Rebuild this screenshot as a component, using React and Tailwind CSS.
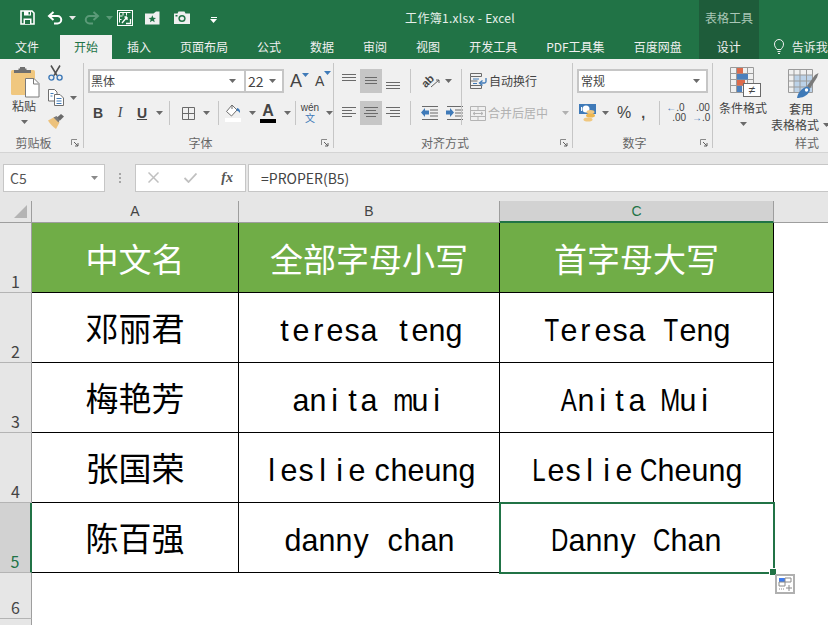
import React from 'react';

const Caret = ({ color = '#6a6a6a', className = '' }) => (
  <svg width="7" height="4" viewBox="0 0 7 4" className={'shrink-0 ' + className}>
    <path d="M0 0h7L3.5 4z" fill={color} />
  </svg>
);

const VSep = ({ className = '' }) => <div className={'w-px shrink-0 bg-[#c6c6c6] ' + className} />;

const Launcher = () => (
  <svg width="8" height="8" viewBox="0 0 8 8" className="ml-1 mr-1 shrink-0">
    <path d="M.5 6V.5H6" fill="none" stroke="#8a8a8a" />
    <path d="M3 3l4 4M7 4v3H4" fill="none" stroke="#5f5f5f" />
  </svg>
);

const GroupLabel = ({ children, className = '' }) => (
  <div className={'mt-auto flex items-center pb-px ' + className}>
    <span className="flex-1 text-center text-xs leading-4 text-[#666666]">{children}</span>
    <Launcher />
  </div>
);

// horizontal text-line icons for the alignment buttons
const Lines = ({ rows, color = '#6a6a6a', height = 24 }) => (
  <svg width="14" height={height} viewBox={'0 0 14 ' + height} className="shrink-0">
    {rows.map(([x1, x2, y], i) => (
      <path key={i} d={'M' + x1 + ' ' + y + 'H' + x2} stroke={color} strokeWidth="1" />
    ))}
  </svg>
);

const SaveIcon = () => (
  <svg width="15" height="15" viewBox="0 0 15 15">
    <path d="M1 1h11l2 2v11H1z" fill="none" stroke="#fff" strokeWidth="1.6" />
    <path d="M4 1h7v4.500H4zM3.500 8.500h8V14h-8z" fill="#fff" />
    <path d="M5 10h5v4H5z" fill="#217346" />
    <path d="M8.500 2h1.500v2.500H8.500z" fill="#217346" />
  </svg>
);

const UndoIcon = ({ color = '#fff', flip = false }) => (
  <svg width="16" height="14" viewBox="0 0 16 14" className={flip ? '-scale-x-100' : ''}>
    <path d="M3 5h7.500a3.700 3.700 0 0 1 0 7.500H7" fill="none" stroke={color} strokeWidth="2" />
    <path d="M6.500 1L2 5l4.500 4" fill="none" stroke={color} strokeWidth="2" />
  </svg>
);

const FrameIcon = () => (
  <svg width="16" height="16" viewBox="0 0 16 16">
    <rect x=".5" y=".5" width="15" height="15" fill="none" stroke="#fff" />
    <path d="M2.500 2.500h11M2.500 2.500v10M6 2.500v3M9.500 2.500v3M2.500 6h3M2.500 9.500h2" stroke="#fff" fill="none" />
    <path d="M5 13l5-6M10 7v3M10 7H7.500M9 13.500h4.500V9" stroke="#fff" strokeWidth="1.3" fill="none" />
  </svg>
);

const StarFolderIcon = () => (
  <svg width="15" height="14" viewBox="0 0 15 14">
    <path d="M0 2.500h8.500L11 .5h3.500V13.500H0z" fill="#f0f0f0" />
    <path d="M7.300 4.200l1.100 2.500 2.600.2-2 1.700.7 2.600-2.400-1.400-2.300 1.400.6-2.600-2-1.700 2.700-.2z" fill="#217346" />
  </svg>
);

const CameraIcon = () => (
  <svg width="16" height="13" viewBox="0 0 16 13">
    <path d="M0 2.500h3.500L4.500.5h6l1 2H16V13H0z" fill="#f0f0f0" />
    <circle cx="8" cy="7.500" r="3.600" fill="#217346" />
    <circle cx="8" cy="7.500" r="2.100" fill="#f0f0f0" />
    <path d="M1.500 4h2v1.500h-2z" fill="#217346" />
  </svg>
);

const PasteIcon = () => (
  <svg width="29" height="31" viewBox="0 0 29 31">
    <rect x="0" y="3" width="24" height="25" rx="1.500" fill="#f0c77f" />
    <path d="M3 3h4.500V1.500h1.500V0h5v1.500h1.500V3H20v3H3z" fill="#6f6f6f" />
    <path d="M14.500 11.500h8.500l5 5V30h-13.500z" fill="#fff" stroke="#7a7a7a" />
    <path d="M22.500 12v5h5" fill="none" stroke="#7a7a7a" />
  </svg>
);

const ScissorsIcon = () => (
  <svg width="15" height="16" viewBox="0 0 15 16">
    <path d="M3 .5l6 10M12 .5l-6 10" stroke="#4f4f4f" strokeWidth="1.5" fill="none" />
    <circle cx="3.400" cy="12.600" r="2.500" fill="none" stroke="#3f7ab8" strokeWidth="1.4" />
    <circle cx="11.600" cy="12.600" r="2.500" fill="none" stroke="#3f7ab8" strokeWidth="1.4" />
  </svg>
);

const CopyIcon = () => (
  <svg width="16" height="17" viewBox="0 0 16 17">
    <path d="M.5.5h6l2.500 2.500v9H.5z" fill="#fff" stroke="#6f6f6f" />
    <path d="M6.500 5.500h5.500l3.500 3.500v7.500h-9z" fill="#fff" stroke="#6f6f6f" />
    <path d="M2.500 4.500h3M2.500 7h2M8.500 9.500h5M8.500 12h5M8.500 14.500h5" stroke="#3f7ab8" />
  </svg>
);

const BrushIcon = () => (
  <svg width="16" height="15" viewBox="0 0 16 15">
    <path d="M0 6.500L6.500 3l5 5.500L8 15C5 13 2 10 0 6.500z" fill="#edc27c" />
    <path d="M5.500 3.500l3-1.500 3.500 3.500-1.500 3z" fill="#7a7a7a" />
    <path d="M9 3.500L13 0l3 2.500-4 4z" fill="#6a6a6a" />
  </svg>
);

const GridIcon = () => (
  <svg width="13" height="13" viewBox="0 0 13 13">
    <path d="M.5.5h12v12H.5zM6.500.5v12M.5 6.500h12" fill="none" stroke="#6a6a6a" />
  </svg>
);

const FillIcon = () => (
  <svg width="16" height="18" viewBox="0 0 16 18">
    <path d="M7 1L1.500 7.500l5 4.500L12 6z" fill="#fff" stroke="#6f6f6f" />
    <path d="M7 1v4" stroke="#6f6f6f" />
    <path d="M12 4c2 .5 3.500 2 3 5-1-1-1.500-2-3.500-2.500z" fill="#3f7ab8" />
    <path d="M0 14h16v4H0z" fill="#fff" />
  </svg>
);

const OrientIcon = () => (
  <div className="flex w-5 items-center">
    <span className="-rotate-45 font-['Liberation_Sans',sans-serif] text-[11px] leading-3 font-bold">ab</span>
    <svg width="10" height="10" viewBox="0 0 10 10" className="-ml-1 mt-1">
      <path d="M1 9l8-7M9 2H6M9 2v3" fill="none" stroke="#5f5f5f" />
    </svg>
  </div>
);

const IndentIcon = ({ flip = false }) => (
  <svg width="17" height="14" viewBox="0 0 17 14">
    {flip ? (
      <path d="M0 4.500h4V2l4 4.500-4 4.500V8.500H0z" fill="#3f7ab8" />
    ) : (
      <path d="M8 4.500H4V2L0 6.500 4 11V8.500h4z" fill="#3f7ab8" />
    )}
    <path d="M1 .5h16M9 4h8M9 7h8M9 10h8M1 13.500h16" stroke="#6a6a6a" />
  </svg>
);

const WrapIcon = () => (
  <svg width="17" height="16" viewBox="0 0 17 16">
    <path d="M.5.5h11v3H.5zM.5 3.500V15.500h11v-3H.5M.5 8h7" fill="none" stroke="#6a6a6a" />
    <path d="M3 6h6M3 10.500h4" stroke="#3f7ab8" />
    <path d="M16 5v3.500a1.500 1.500 0 0 1-1.500 1.500H10" fill="none" stroke="#3f7ab8" strokeWidth="1.3" />
    <path d="M12.500 7.500L9.500 10l3 2.500" fill="none" stroke="#3f7ab8" strokeWidth="1.3" />
  </svg>
);

const MergeIcon = () => (
  <svg width="16" height="15" viewBox="0 0 16 15">
    <path d="M.5.5h15v14H.5zM.5 4.500h15M.5 10.500h15M8 .5v4M8 10.500v4" fill="none" stroke="#b4b4b4" />
    <path d="M3 7.500h10M5 6L3 7.500 5 9M11 6l2 1.500L11 9" fill="none" stroke="#b4b4b4" />
  </svg>
);

const CurrencyIcon = () => (
  <svg width="17" height="18" viewBox="0 0 17 18">
    <path d="M0 0h17v10H0z" fill="#3f7ab8" />
    <ellipse cx="7" cy="5" rx="3.500" ry="3.500" fill="#fff" />
    <path d="M2 3h1v4H2z" fill="#fff" />
    <ellipse cx="11.500" cy="8" rx="4" ry="2" fill="#f0c77f" />
    <ellipse cx="11.500" cy="11.500" rx="4.500" ry="2" fill="#edb64f" />
    <ellipse cx="9" cy="15.500" rx="4.500" ry="2" fill="#f0c77f" />
  </svg>
);

const CondFormatIcon = () => (
  <svg width="32" height="31" viewBox="0 0 32 31">
    <path d="M.5.500h23v25H.5zM6.500.5v25M17.500.5v25M.5 6.500h23M.5 12.500h23M.5 18.500h23" fill="none" stroke="#9a9a9a" />
    <path d="M7 1h6v5.500H7z" fill="#dd6b4c" />
    <path d="M7 7h11v5.500H7z" fill="#4c80bd" />
    <path d="M7 13h8v5.500H7z" fill="#dd6b4c" />
    <path d="M7 19h5v6H7z" fill="#4c80bd" />
    <rect x="13.500" y="16.500" width="17" height="13" fill="#fff" stroke="#6a6a6a" />
    <text x="22" y="27" textAnchor="middle" fontSize="12" fill="#444444" fontFamily="Liberation Sans">≠</text>
  </svg>
);

const TableStyleIcon = () => (
  <svg width="31" height="30" viewBox="0 0 31 30">
    <path d="M6 6h19v17H6z" fill="#bcd2e8" />
    <path d="M.5.500h24v23H.5zM6 .5v23M12 .5v23M18.500.5v23M.5 6h24M.5 12h24M.5 18h24" fill="none" stroke="#9a9a9a" />
    <path d="M19 17L27 6l3.500-2-1.500 4.500-7 11z" fill="#7a7a7a" />
    <path d="M9 29c.5-5 5-10 10-11.500 3 .5 3.500 3 2.500 5C19 27 14 29 9 29z" fill="#3f7ab8" />
    <circle cx="18.500" cy="21" r="1.700" fill="#fff" />
  </svg>
);

const Select = ({ children, className = '' }) => (
  <div className={'flex h-6 items-center justify-between border-2 border-[#c6c6c6] bg-white ' + className}>
    {children}
  </div>
);

const tabs = ['插入', '页面布局', '公式', '数据', '审阅', '视图', '开发工具', 'PDF工具集', '百度网盘'];

const rows = [
  { n: 2, cn: '邓丽君', lower: 'teresa teng', proper: 'Teresa Teng' },
  { n: 3, cn: '梅艳芳', lower: 'anita mui', proper: 'Anita Mui' },
  { n: 4, cn: '张国荣', lower: 'leslie cheung', proper: 'Leslie Cheung', narrow: true },
  { n: 5, cn: '陈百强', lower: 'danny chan', proper: 'Danny Chan' },
];

// the sheet font sets latin letters in equal-width cells, wide ones get squeezed
const WIDE = 'MmDCATL';

const Latin = ({ text, narrow }) => (
  <div className="flex pt-1 font-['Liberation_Sans',sans-serif] text-[32px] leading-10 text-black">
    {text.split('').map((ch, i) => (
      ch === ' '
        ? <span key={i} className={narrow ? 'w-2 whitespace-pre' : 'w-[17px] whitespace-pre'}> </span>
        : (
          <span key={i} className="flex w-[17px] justify-center">
            <span className={WIDE.includes(ch) ? 'scale-x-75' : 'scale-x-95'}>{ch}</span>
          </span>
        )
    ))}
  </div>
);

const RowHead = ({ n, active }) => (
  <div className={'flex items-end justify-center border-b border-[#b4b4b4] pb-px text-base leading-5 ' + (active ? 'border-r-2 border-r-[#217346] bg-[#d2d2d2] text-[#217346]' : 'border-r border-r-[#9e9e9e] bg-[#e6e6e6] text-[#444444]')}>
    {n}
  </div>
);

const App = () => {
  return (
    <div className="h-[625px] w-[828px] overflow-hidden bg-white font-['Noto_Sans_CJK_SC',sans-serif]">
      {/* title bar */}
      <div className="flex h-[35px] bg-[#217346]">
        <div className="flex w-[699px] items-center pl-5">
          <SaveIcon />
          <div className="ml-3"><UndoIcon /></div>
          <Caret color="#e8e8e8" className="ml-1.5" />
          <div className="ml-2"><UndoIcon color="#5b9a78" flip /></div>
          <Caret color="#5b9a78" className="ml-1.5" />
          <div className="ml-1"><FrameIcon /></div>
          <div className="ml-3"><StarFolderIcon /></div>
          <div className="ml-3.5"><CameraIcon /></div>
          <div className="ml-5 mt-1 flex flex-col items-center gap-px">
            <div className="h-px w-1.5 bg-white" />
            <Caret color="#fff" />
          </div>
          <span className="ml-auto mr-46 text-xs tracking-wide text-[#e6efe9]">工作簿1.xlsx - Excel</span>
        </div>
        <div className="flex w-15 items-center justify-center bg-[#1e5c3a] text-xs text-[#a9c7b6]">表格工具</div>
      </div>

      {/* tabs */}
      <div className="flex h-6 gap-px bg-[#217346] pl-px text-xs leading-6 text-[#f0f0f0]">
        <div className="px-3.5">文件</div>
        <div className="ml-1.5 bg-[#f0f0f0] px-3.5 text-[#217346]">开始</div>
        {tabs.map(t => <div key={t} className="px-3.5 whitespace-nowrap">{t}</div>)}
        <div className="ml-0.5 w-15 bg-[#1e5c3a] text-center">设计</div>
        <div className="ml-3.5 flex items-center gap-2 whitespace-nowrap">
          <svg width="10" height="16" viewBox="0 0 10 16">
            <path d="M3 10.500C2 8.500.5 8 .5 5a4.500 4.500 0 0 1 9 0c0 3-1.500 3.500-2.500 5.500zM3.500 12.500h3M4 14.500h2" fill="none" stroke="#f0f0f0" />
          </svg>
          告诉我
        </div>
      </div>

      {/* ribbon */}
      <div className="flex h-[94px] border-b border-[#d4d4d4] bg-[#f0f0f0] text-xs text-[#444444]">
        <div className="flex w-[83px] shrink-0 flex-col">
          <div className="flex pl-2 pt-2">
            <div className="flex w-8 flex-col items-center">
              <div className="self-end"><PasteIcon /></div>
              <span className="leading-4">粘贴</span>
              <Caret className="mt-1.5" />
            </div>
            <div className="-mt-0.5 ml-2 flex flex-col gap-2">
              <ScissorsIcon />
              <div className="flex items-center gap-1.5">
                <CopyIcon />
                <Caret />
              </div>
              <BrushIcon />
            </div>
          </div>
          <GroupLabel>剪贴板</GroupLabel>
        </div>
        <VSep className="my-1" />

        <div className="flex w-[249px] shrink-0 flex-col pl-1 pt-2.5">
          <div className="flex h-6 items-center">
            <Select className="w-[158px] pl-px pr-2">
              <span className="text-[#444444]">黑体</span>
              <Caret />
            </Select>
            <Select className="-ml-0.5 w-10 pl-0.5 pr-1.5">
              <span className="text-sm">22</span>
              <Caret />
            </Select>
            <div className="ml-1.5 flex items-start">
              <span className="font-['Liberation_Sans',sans-serif] text-lg leading-5">A</span>
              <Caret color="#3f7ab8" className="mt-0.5" />
            </div>
            <div className="ml-1.5 flex items-start">
              <span className="font-['Liberation_Sans',sans-serif] text-sm leading-6">A</span>
              <Caret color="#3f7ab8" className="mt-0.5" />
            </div>
          </div>
          <div className="mt-2 flex h-6 items-center font-['Liberation_Sans',sans-serif]">
            <span className="w-5 text-center text-sm font-bold">B</span>
            <span className="ml-0.5 w-5 text-center font-['Liberation_Serif',serif] text-sm italic">I</span>
            <span className="ml-0.5 w-5 text-center text-sm font-bold underline">U</span>
            <Caret className="ml-1" />
            <VSep className="ml-1.5 h-full" />
            <div className="ml-3"><GridIcon /></div>
            <Caret className="ml-2" />
            <VSep className="ml-2 h-full" />
            <div className="ml-1.5"><FillIcon /></div>
            <Caret className="ml-2" />
            <div className="ml-1 flex flex-col items-center">
              <span className="text-base leading-4 font-bold">A</span>
              <div className="h-1 w-4 bg-black" />
            </div>
            <Caret className="ml-2" />
            <VSep className="ml-1 h-full" />
            <div className="ml-1.5 flex w-4 flex-col items-center text-[10px] leading-2.5">
              <span>wén</span>
              <span className="font-['Noto_Sans_CJK_SC',sans-serif] text-[#3f7ab8]">文</span>
            </div>
            <Caret className="ml-2" />
          </div>
          <GroupLabel className="-ml-1">字体</GroupLabel>
        </div>
        <VSep className="my-1" />

        <div className="flex w-[238px] shrink-0 flex-col pl-2 pt-2.5">
          <div className="flex">
            <div className="flex w-[119px] shrink-0">
              <div className="flex flex-col gap-2">
                <div className="flex h-6 items-center gap-1">
                  <Lines rows={[[0, 14, 5.5], [0, 14, 8.5], [0, 14, 11.5]]} />
                  <div className="flex h-6 w-5.5 justify-center bg-[#c6c6c6]">
                    <Lines rows={[[1, 13, 8.5], [1, 13, 11.5], [1, 13, 14.5]]} />
                  </div>
                  <Lines rows={[[0, 14, 13.5], [0, 14, 16.5], [0, 14, 19.5]]} />
                  <VSep className="ml-1.5 h-full" />
                  <div className="ml-1.5"><OrientIcon /></div>
                  <Caret />
                </div>
                <div className="flex h-6 items-center gap-1">
                  <Lines rows={[[0, 14, 6.5], [0, 10, 9.5], [0, 14, 12.5], [0, 10, 15.5]]} />
                  <div className="flex h-6 w-5.5 justify-center bg-[#c6c6c6]">
                    <Lines rows={[[0, 14, 6.5], [2, 12, 9.5], [0, 14, 12.5], [2, 12, 15.5]]} />
                  </div>
                  <Lines rows={[[0, 14, 6.5], [4, 14, 9.5], [0, 14, 12.5], [4, 14, 15.5]]} />
                  <VSep className="ml-1.5 h-full" />
                  <div className="ml-1.5"><IndentIcon /></div>
                  <div className="ml-1"><IndentIcon flip /></div>
                </div>
              </div>
            </div>
            <VSep />
            <div className="ml-2 flex flex-col gap-2 text-[#444444]">
              <div className="flex h-6 items-center gap-0.5">
                <WrapIcon />
                <span>自动换行</span>
              </div>
              <div className="flex h-6 items-center gap-0.5 text-[#b1b1b1]">
                <MergeIcon />
                <span>合并后居中</span>
                <Caret color="#b1b1b1" className="ml-3" />
              </div>
            </div>
          </div>
          <GroupLabel className="-ml-2">对齐方式</GroupLabel>
        </div>
        <VSep className="my-1" />

        <div className="flex w-[139px] shrink-0 flex-col pl-1 pt-2.5">
          <Select className="w-[131px] pl-0.5 pr-1.5">
            <span>常规</span>
            <Caret />
          </Select>
          <div className="mt-2 flex h-6 items-center font-['Liberation_Sans',sans-serif]">
            <div className="ml-0.5"><CurrencyIcon /></div>
            <Caret className="ml-1.5" />
            <span className="ml-2 text-base leading-6">%</span>
            <span className="ml-2.5 text-sm leading-4 font-bold">,</span>
            <VSep className="ml-3.5 h-full" />
            <div className="ml-1.5 flex flex-col text-[10px] leading-2.5">
              <span><span className="text-[#3f7ab8]">←</span>.0</span>
              <span className="pl-1.5">.00</span>
            </div>
            <div className="ml-1.5 flex flex-col text-[10px] leading-2.5">
              <span className="pl-1">.00</span>
              <span><span className="text-[#3f7ab8]">→</span>.0</span>
            </div>
          </div>
          <GroupLabel className="-ml-1">数字</GroupLabel>
        </div>
        <VSep className="my-1" />

        <div className="flex min-w-0 flex-1 flex-col">
          <div className="flex pl-1.5 pt-2">
            <div className="flex w-12 shrink-0 flex-col items-center">
              <div className="pl-1.5"><CondFormatIcon /></div>
              <span className="mt-0.5 leading-4">条件格式</span>
              <Caret className="mt-1.5" />
            </div>
            <div className="ml-1 flex w-12 shrink-0 flex-col items-center">
              <div className="pl-4 pt-0.5"><TableStyleIcon /></div>
              <span className="mt-0.5 pl-3 leading-4">套用</span>
              <span className="whitespace-nowrap leading-4">表格格式</span>
            </div>
            <Caret className="ml-1 mt-14" />
          </div>
          <div className="mt-auto pb-px pl-20.5 text-[#666666] leading-4">样式</div>
        </div>
      </div>

      {/* formula bar */}
      <div className="flex h-12 items-center bg-[#e6e6e6] pl-[3px] pt-px">
        <div className="flex h-7 w-[102px] items-center justify-between border border-[#c6c6c6] bg-white pl-1.5 pr-1.5 text-sm text-[#555555]">
          <span>C5</span>
          <Caret color="#8a8a8a" />
        </div>
        <div className="ml-3.5 flex flex-col gap-0.5">
          <div className="size-0.5 bg-[#a6a6a6]" />
          <div className="size-0.5 bg-[#a6a6a6]" />
          <div className="size-0.5 bg-[#a6a6a6]" />
        </div>
        <div className="ml-3.5 flex h-7 w-[111px] items-center justify-between border border-[#c6c6c6] bg-white pl-3 pr-3">
          <svg width="11" height="11" viewBox="0 0 11 11"><path d="M.5.5l10 10M10.500.5l-10 10" stroke="#c0c0c0" strokeWidth="1.5" /></svg>
          <svg width="13" height="10" viewBox="0 0 13 10"><path d="M.5 5l4 4 8-8.500" fill="none" stroke="#c0c0c0" strokeWidth="1.8" /></svg>
          <span className="font-['Liberation_Serif',serif] text-sm font-bold italic text-[#555555]">fx</span>
        </div>
        <div className="ml-0.5 flex h-7 flex-1 items-center border border-[#c6c6c6] border-r-0 bg-white pl-3 text-sm text-[#444444]">
          =PROPER(B5)
        </div>
      </div>

      {/* sheet */}
      <div className="relative grid h-[424px] grid-cols-[32px_207px_261px_274px_1fr] grid-rows-[22px_70px_70px_70px_70px_70px_46px_1fr]">
        <div className="flex items-end justify-end border-r border-b border-[#9e9e9e] bg-[#e6e6e6] pb-1 pr-1">
          <svg width="13" height="13" viewBox="0 0 13 13"><path d="M13 0v13H0z" fill="#b4b4b4" /></svg>
        </div>
        <div className="border-r border-b border-[#9e9e9e] bg-[#e6e6e6] text-center font-['Liberation_Sans',sans-serif] text-sm leading-5 text-[#444444]">A</div>
        <div className="border-r border-b border-[#9e9e9e] bg-[#e6e6e6] text-center font-['Liberation_Sans',sans-serif] text-sm leading-5 text-[#444444]">B</div>
        <div className="border-r border-b-2 border-r-[#9e9e9e] border-b-[#217346] bg-[#d2d2d2] text-center font-['Liberation_Sans',sans-serif] text-sm leading-5 text-[#217346]">C</div>
        <div className="border-b border-[#9e9e9e] bg-[#e6e6e6]" />

        <RowHead n={1} />
        {['中文名', '全部字母小写', '首字母大写'].map(h => (
          <div key={h} className="flex items-center justify-center border-r border-b border-black bg-[#70ad47] pt-0.5 text-[33px] text-white">{h}</div>
        ))}
        <div />

        {rows.map(r => (
          <React.Fragment key={r.n}>
            <RowHead n={r.n} active={r.n === 5} />
            <div className="flex items-center justify-center border-r border-b border-black pt-px text-[33px] text-black">{r.cn}</div>
            <div className="flex items-center justify-center border-r border-b border-black"><Latin text={r.lower} narrow={r.narrow} /></div>
            <div className="flex items-center justify-center border-r border-b border-black"><Latin text={r.proper} narrow={r.narrow} /></div>
            <div />
          </React.Fragment>
        ))}

        <RowHead n={6} />
        <div className="col-span-4" />
        <div className="border-r border-r-[#9e9e9e] bg-[#e6e6e6]" />

        {/* selected cell C5 */}
        <div className="pointer-events-none absolute left-[499px] top-[301px] h-[72px] w-[276px] border-2 border-[#217346]">
          <div className="absolute -bottom-1 -right-1 size-2 border border-white bg-[#217346]" />
        </div>
        <div className="absolute left-[775px] top-[373px] flex size-5 items-center justify-center border-2 border-[#b0b0b0] bg-white">
          <svg width="14" height="14" viewBox="0 0 14 14">
            <path d="M1 1h6v4H1z" fill="#3f7cf0" />
            <path d="M7 1h6v4H7zM1 5h6v4H1z" fill="none" stroke="#8a8a8a" />
            <path d="M1 12h6" stroke="#8a8a8a" strokeDasharray="1 1" />
            <path d="M11 8v6M8 11h6" stroke="#8a8a8a" />
          </svg>
        </div>
      </div>
    </div>
  );
};

export default App;
